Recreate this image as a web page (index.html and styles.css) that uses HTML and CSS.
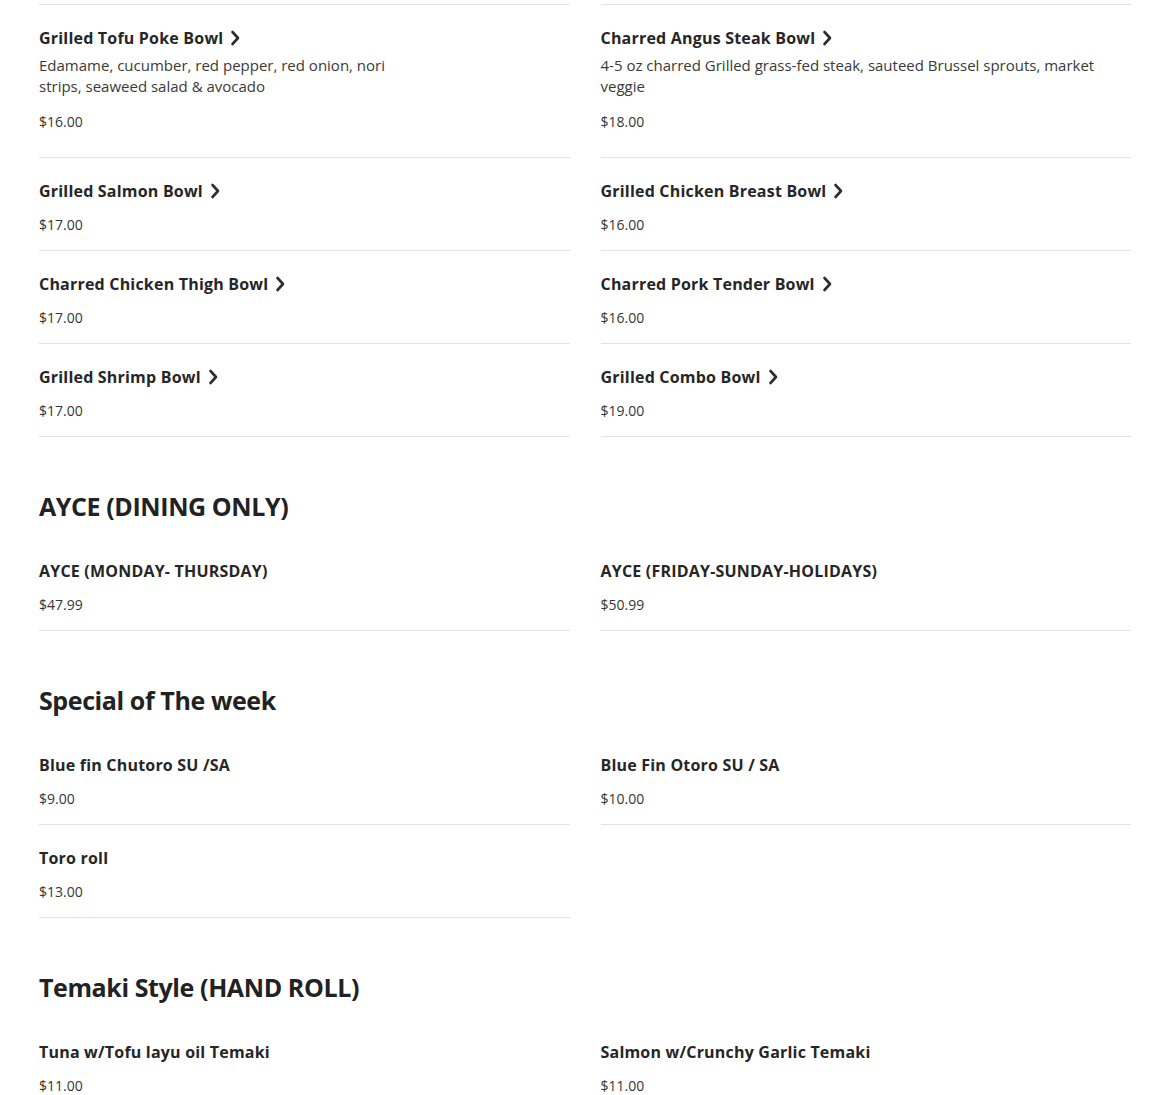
FILE: index.html
```html
<!DOCTYPE html>
<html lang="en">
<head>
<meta charset="utf-8">
<title>Menu</title>
<link rel="stylesheet" href="styles.css">
</head>
<body>
<main class="menu">
  <div class="grid">
    <div class="tail"></div>
    <div class="tail"></div>

    <div class="item item--desc">
      <div class="name">Grilled Tofu Poke Bowl <svg class="chev" viewBox="0 0 10 16"><path d="M2.5 2 L8 8 L2.5 14"/></svg></div>
      <p class="desc">Edamame, cucumber, red pepper, red onion, nori<br>strips, seaweed salad &amp; avocado</p>
      <div class="price">$16.00</div>
    </div>
    <div class="item item--desc">
      <div class="name">Charred Angus Steak Bowl <svg class="chev" viewBox="0 0 10 16"><path d="M2.5 2 L8 8 L2.5 14"/></svg></div>
      <p class="desc">4-5 oz charred Grilled grass-fed steak, sauteed Brussel sprouts, market<br>veggie</p>
      <div class="price">$18.00</div>
    </div>

    <div class="item">
      <div class="name">Grilled Salmon Bowl <svg class="chev" viewBox="0 0 10 16"><path d="M2.5 2 L8 8 L2.5 14"/></svg></div>
      <div class="price">$17.00</div>
    </div>
    <div class="item">
      <div class="name">Grilled Chicken Breast Bowl <svg class="chev" viewBox="0 0 10 16"><path d="M2.5 2 L8 8 L2.5 14"/></svg></div>
      <div class="price">$16.00</div>
    </div>

    <div class="item">
      <div class="name">Charred Chicken Thigh Bowl <svg class="chev" viewBox="0 0 10 16"><path d="M2.5 2 L8 8 L2.5 14"/></svg></div>
      <div class="price">$17.00</div>
    </div>
    <div class="item">
      <div class="name">Charred Pork Tender Bowl <svg class="chev" viewBox="0 0 10 16"><path d="M2.5 2 L8 8 L2.5 14"/></svg></div>
      <div class="price">$16.00</div>
    </div>

    <div class="item">
      <div class="name">Grilled Shrimp Bowl <svg class="chev" viewBox="0 0 10 16"><path d="M2.5 2 L8 8 L2.5 14"/></svg></div>
      <div class="price">$17.00</div>
    </div>
    <div class="item">
      <div class="name">Grilled Combo Bowl <svg class="chev" viewBox="0 0 10 16"><path d="M2.5 2 L8 8 L2.5 14"/></svg></div>
      <div class="price">$19.00</div>
    </div>
  </div>

  <section class="section">
    <h2 class="heading">AYCE (DINING ONLY)</h2>
    <div class="grid">
      <div class="item">
        <div class="name">AYCE (MONDAY- THURSDAY)</div>
        <div class="price">$47.99</div>
      </div>
      <div class="item">
        <div class="name">AYCE (FRIDAY-SUNDAY-HOLIDAYS)</div>
        <div class="price">$50.99</div>
      </div>
    </div>
  </section>

  <section class="section">
    <h2 class="heading">Special of The week</h2>
    <div class="grid">
      <div class="item">
        <div class="name">Blue fin Chutoro SU /SA</div>
        <div class="price">$9.00</div>
      </div>
      <div class="item">
        <div class="name">Blue Fin Otoro SU / SA</div>
        <div class="price">$10.00</div>
      </div>
      <div class="item">
        <div class="name">Toro roll</div>
        <div class="price">$13.00</div>
      </div>
    </div>
  </section>

  <section class="section">
    <h2 class="heading">Temaki Style (HAND ROLL)</h2>
    <div class="grid">
      <div class="item">
        <div class="name">Tuna w/Tofu layu oil Temaki</div>
        <div class="price">$11.00</div>
      </div>
      <div class="item">
        <div class="name">Salmon w/Crunchy Garlic Temaki</div>
        <div class="price">$11.00</div>
      </div>
    </div>
  </section>
</main>
</body>
</html>
```

FILE: styles.css
```css
* { box-sizing: border-box; }

html, body {
  margin: 0;
  padding: 0;
  background: #ffffff;
}

body {
  font-family: "Open Sans", "Noto Sans", "DejaVu Sans", sans-serif;
  color: #262626;
}

.menu {
  width: 1092px;
  margin-left: 39px;
  padding-top: 4px;
}

.grid {
  display: grid;
  grid-template-columns: 1fr 1fr;
  column-gap: 31px;
}

.tail {
  height: 0;
  border-bottom: 1px solid #e3e3e3;
}

.item {
  padding: 23px 0 15px;
  border-bottom: 1px solid #e3e3e3;
}

.item--desc {
  padding-bottom: 25px;
}

.name {
  display: flex;
  align-items: center;
  gap: 7px;
  font-size: 16px;
  line-height: 20px;
  font-weight: 700;
  color: #262626;
  letter-spacing: 0.2px;
}

.chev {
  width: 10px;
  height: 16px;
  flex: none;
}

.chev path {
  fill: none;
  stroke: #2e2e2e;
  stroke-width: 2.6;
  stroke-linecap: round;
  stroke-linejoin: round;
}

.desc {
  margin: 7px 0 0;
  font-size: 15px;
  line-height: 21px;
  color: #3a3a3a;
}

.price {
  margin-top: 14px;
  font-size: 14px;
  line-height: 20px;
  color: #363636;
}

.item--desc .price {
  margin-top: 15px;
}

.section {
  margin-top: 51px;
}

.heading {
  margin: 0 0 14px;
  font-size: 25px;
  line-height: 36px;
  font-weight: 700;
  color: #222222;
  letter-spacing: -0.4px;
}
```
